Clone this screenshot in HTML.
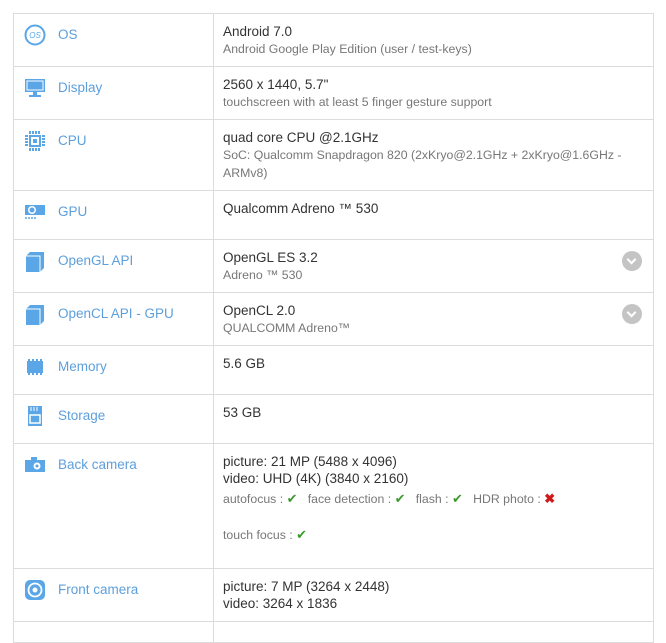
<!DOCTYPE html>
<html><head><meta charset="utf-8"><style>
body{margin:0;background:#fff;width:666px;height:625px;overflow:hidden;font-family:"Liberation Sans",sans-serif}
.t{position:absolute;left:13px;top:13px;width:639px;border-left:1px solid #dcdcdc;border-right:1px solid #dcdcdc;border-top:1px solid #dcdcdc}
.r{position:relative;border-bottom:1px solid #dcdcdc}
.r:before{content:"";position:absolute;left:199px;top:0;bottom:0;border-left:1px solid #dcdcdc}
.l{position:absolute;left:44px;top:13px;font-size:13.5px;color:#5d9fdc}
.ic{position:absolute;left:10px;top:10px;width:22px;height:22px}
.v{position:absolute;left:209px;top:9px;font-size:13.5px;color:#333;line-height:17px}
.s{font-size:12.3px;color:#777}
.g{color:#3a9a2a;font-size:13px}
.x{color:#d01818;font-size:13px;font-weight:bold}
.ch{position:absolute;left:608px;top:11px;width:20px;height:20px;border-radius:50%;background:#c4c4c4}
.ch:after{content:"";position:absolute;left:6px;top:5px;width:5px;height:5px;border-right:2.5px solid #fff;border-bottom:2.5px solid #fff;transform:rotate(45deg)}
</style></head><body>
<div class="t">
<div class="r" style="height:52px"><svg class="ic" viewBox="0 0 22 22"><circle cx="11" cy="11" r="9.5" fill="none" stroke="#5aa6e6" stroke-width="2"/><text x="11" y="14" font-size="8" font-style="italic" text-anchor="middle" fill="#5aa6e6" font-family="Liberation Sans">OS</text></svg><div class="l">OS</div><div class="v">Android 7.0<br><span class="s">Android Google Play Edition (user / test-keys)</span></div></div>
<div class="r" style="height:52px"><svg class="ic" viewBox="0 0 22 22"><rect x="1" y="2" width="20" height="13" fill="#5aa6e6"/><rect x="3" y="4" width="16" height="9" fill="none" stroke="#fff" stroke-width="1"/><rect x="9" y="15" width="4" height="3" fill="#5aa6e6"/><rect x="5" y="18" width="12" height="2" fill="#5aa6e6"/></svg><div class="l">Display</div><div class="v">2560 x 1440, 5.7"<br><span class="s">touchscreen with at least 5 finger gesture support</span></div></div>
<div class="r" style="height:70px"><svg class="ic" viewBox="0 0 22 22"><rect x="6" y="6" width="10" height="10" fill="none" stroke="#5aa6e6" stroke-width="2"/><rect x="9" y="9" width="4" height="4" fill="#5aa6e6"/><path d="M6 1v3M9 1v3M12 1v3M15 1v3M6 18v3M9 18v3M12 18v3M15 18v3M1 6h3M1 9h3M1 12h3M1 15h3M18 6h3M18 9h3M18 12h3M18 15h3" stroke="#5aa6e6" stroke-width="2"/></svg><div class="l">CPU</div><div class="v">quad core CPU @2.1GHz<br><span class="s">SoC: Qualcomm Snapdragon 820 (2xKryo@2.1GHz + 2xKryo@1.6GHz -<br>ARMv8)</span></div></div>
<div class="r" style="height:48px"><svg class="ic" viewBox="0 0 22 22"><path d="M1 4h20v10H1z" fill="#5aa6e6"/><circle cx="8" cy="9" r="4" fill="#fff"/><circle cx="8" cy="9" r="2.5" fill="#5aa6e6"/><path d="M2 16v2M5 16v2M8 16v2M11 16v2" stroke="#5aa6e6" stroke-width="1.5"/></svg><div class="l">GPU</div><div class="v">Qualcomm Adreno ™ 530</div></div>
<div class="r" style="height:52px"><svg class="ic" viewBox="0 0 22 22"><path d="M2 6l4-4h14v16l-4 4H2z" fill="#5aa6e6"/><path d="M2 6h14v16" fill="none" stroke="#fff" stroke-width="1"/></svg><div class="l">OpenGL API</div><div class="v">OpenGL ES 3.2<br><span class="s">Adreno ™ 530</span></div><div class="ch"></div></div>
<div class="r" style="height:52px"><svg class="ic" viewBox="0 0 22 22"><path d="M2 6l4-4h14v16l-4 4H2z" fill="#5aa6e6"/><path d="M2 6h14v16" fill="none" stroke="#fff" stroke-width="1"/></svg><div class="l">OpenCL API - GPU</div><div class="v">OpenCL 2.0<br><span class="s">QUALCOMM Adreno™</span></div><div class="ch"></div></div>
<div class="r" style="height:48px"><svg class="ic" viewBox="0 0 22 22"><rect x="3" y="5" width="16" height="12" fill="#5aa6e6"/><path d="M5 3v16M9 3v16M13 3v16M17 3v16" stroke="#5aa6e6" stroke-width="2" stroke-dasharray="2 12"/></svg><div class="l">Memory</div><div class="v">5.6 GB</div></div>
<div class="r" style="height:48px"><svg class="ic" viewBox="0 0 22 22"><rect x="4" y="1" width="14" height="20" fill="#5aa6e6"/><rect x="6" y="10" width="10" height="8" fill="none" stroke="#fff" stroke-width="1.5"/><path d="M7 2v4M10 2v4M13 2v4" stroke="#fff"/></svg><div class="l">Storage</div><div class="v">53 GB</div></div>
<div class="r" style="height:124px"><svg class="ic" viewBox="0 0 22 22"><rect x="1" y="6" width="20" height="12" fill="#5aa6e6"/><rect x="7" y="3" width="6" height="3" fill="#5aa6e6"/><circle cx="13" cy="12" r="3.5" fill="#fff"/><circle cx="13" cy="12" r="1.5" fill="#5aa6e6"/></svg><div class="l">Back camera</div><div class="v">picture: 21 MP (5488 x 4096)<br>video: UHD (4K) (3840 x 2160)<br><span class="s" style="display:inline-block;margin-top:3px">autofocus : <span class="g">✔</span> &nbsp; face detection : <span class="g">✔</span> &nbsp; flash : <span class="g">✔</span> &nbsp; HDR photo : <span class="x">✖</span></span><br><span class="s" style="display:inline-block;margin-top:18px">touch focus : <span class="g">✔</span></span></div></div>
<div class="r" style="height:52px"><svg class="ic" viewBox="0 0 22 22"><rect x="1" y="1" width="20" height="20" rx="5" fill="#5aa6e6"/><circle cx="11" cy="11" r="6.5" fill="none" stroke="#fff" stroke-width="1.8"/><circle cx="11" cy="11" r="2.5" fill="#fff"/></svg><div class="l">Front camera</div><div class="v">picture: 7 MP (3264 x 2448)<br>video: 3264 x 1836</div></div>
<div class="r" style="height:20px"></div>
</div>
</body></html>
